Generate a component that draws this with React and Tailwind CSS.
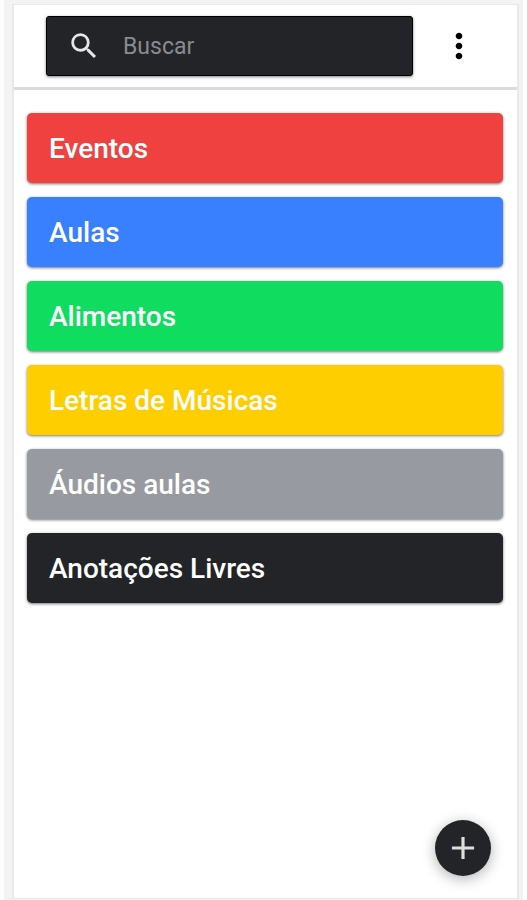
import React, { useState } from "react";
import { MdAdd, MdMoreVert, MdSearch } from "react-icons/md";

const categories = [
  { name: "Eventos", color: "bg-[#f04141]" },
  { name: "Aulas", color: "bg-[#3880ff]" },
  { name: "Alimentos", color: "bg-[#10dc60]" },
  { name: "Letras de Músicas", color: "bg-[#ffce00]" },
  { name: "Áudios aulas", color: "bg-[#989aa2]" },
  { name: "Anotações Livres", color: "bg-[#222428]" },
];

export default function App() {
  const [search, setSearch] = useState("");

  return (
    <div className="min-h-screen bg-[#fdfdfd] px-1 font-['Roboto',sans-serif]">
      <div className="flex min-h-screen flex-col bg-[#f3f3f3] pt-1 pr-1 pb-px pl-2">
        <div className="relative flex flex-1 flex-col border-2 border-t border-b border-[#e9e9e9] bg-white">
          <header className="flex items-center border-b-3 border-[#dcdcdc] py-[11px] pr-[38px] pl-8">
            <label className="flex h-[60px] min-w-0 flex-1 items-center rounded-[3px] border border-black bg-[#222428] pl-5 shadow-[0_1px_3px_rgba(0,0,0,0.5)]">
              <MdSearch className="size-[34px] shrink-0 text-[#e6e6e6]" />
              <input
                type="text"
                aria-label="Buscar"
                placeholder="Buscar"
                value={search}
                onChange={(e) => setSearch(e.target.value)}
                className="ml-[22px] w-full min-w-0 bg-transparent pt-0.5 text-[23px] text-white outline-none placeholder:text-[#8a8b8e]"
              />
            </label>
            <button type="button" aria-label="Mais opções" className="ml-[26px]">
              <MdMoreVert className="size-10 text-black" />
            </button>
          </header>

          <main className="flex flex-col gap-[14px] pt-[23px] pr-[14px] pb-24 pl-[13px]">
            {categories.map((item) => (
              <button
                key={item.name}
                type="button"
                className={`h-[70px] rounded-[5px] px-[22px] pt-0.5 text-left text-[28px] font-medium text-white shadow-[0_1px_3px_rgba(0,0,0,0.55)] ${item.color}`}
              >
                {item.name}
              </button>
            ))}
          </main>

          <button
            type="button"
            aria-label="Adicionar"
            className="absolute right-[26px] bottom-[22px] flex size-14 items-center justify-center rounded-full bg-[#222428] shadow-[0_3px_14px_rgba(0,0,0,0.3)]"
          >
            <MdAdd className="size-[38px] text-[#dedede]" />
          </button>
        </div>
      </div>
    </div>
  );
}
